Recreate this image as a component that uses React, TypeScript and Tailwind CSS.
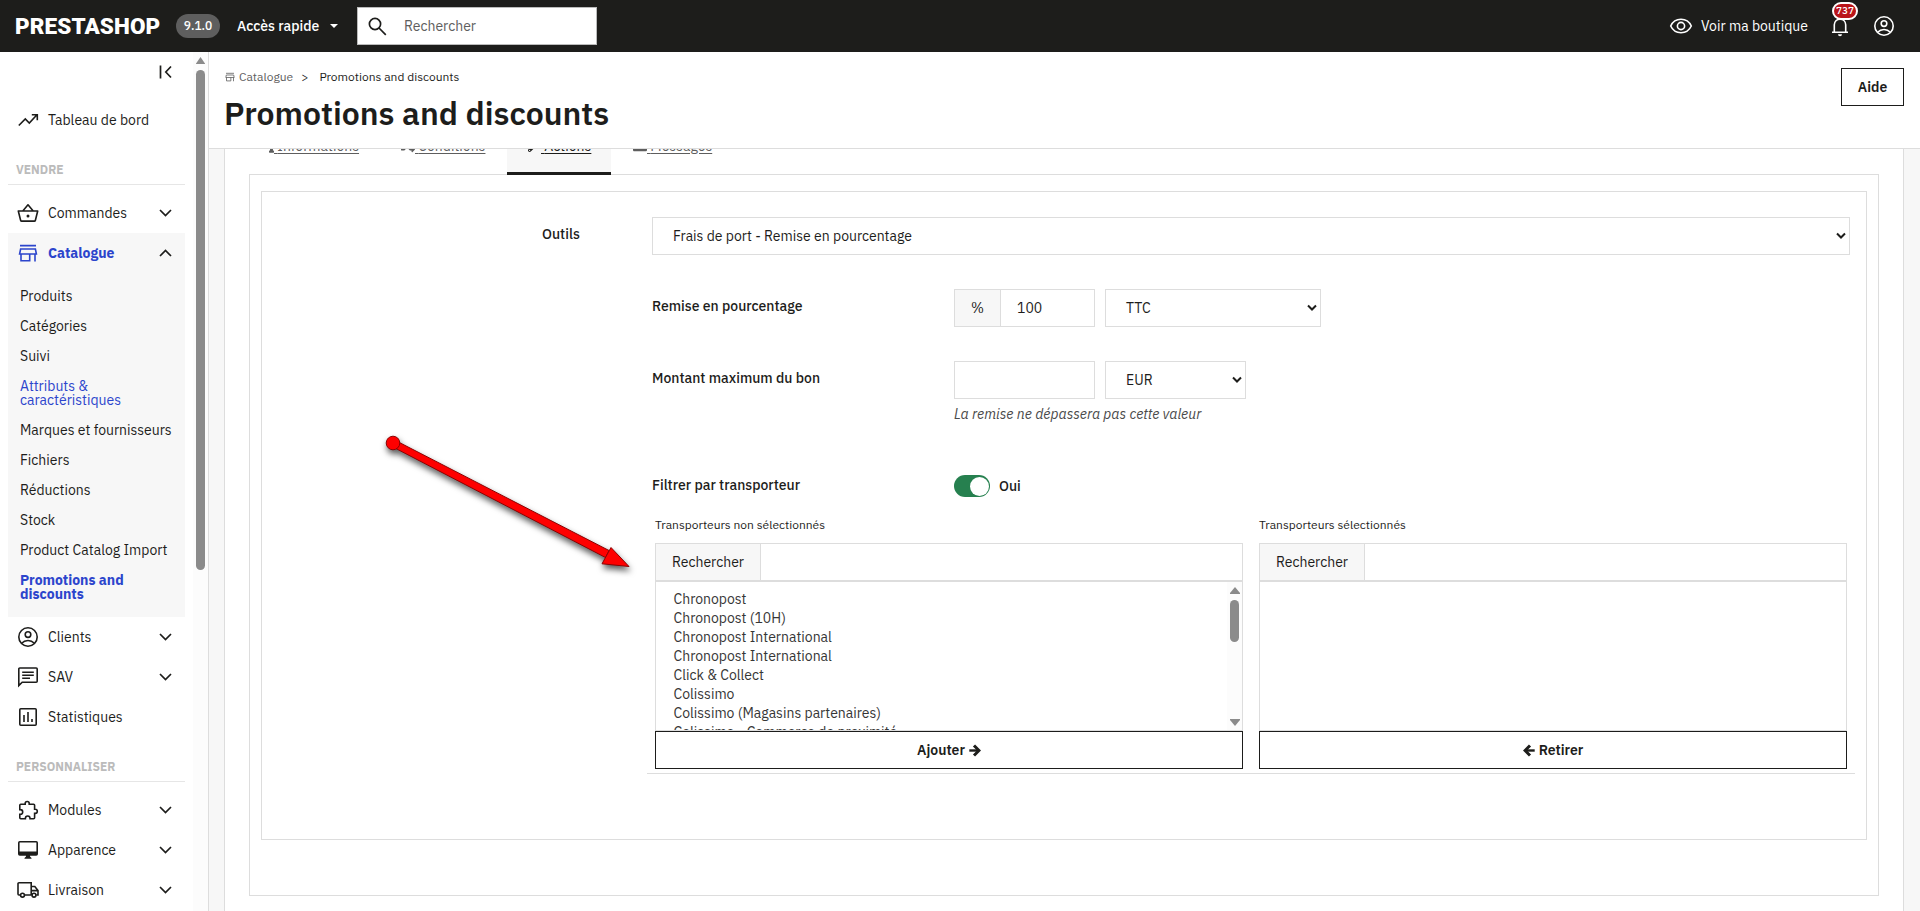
import type { ReactNode } from "react";
import type { IconType } from "react-icons";
import { FaEnvelope, FaInfo, FaRandom, FaWrench } from "react-icons/fa";

type IconProps = { size?: number; className?: string };

function Glyph({ size = 24, className = "", children }: IconProps & { children: ReactNode }) {
  return (
    <svg width={size} height={size} viewBox="0 0 24 24" fill="none" stroke="currentColor" strokeWidth="1.600" className={`shrink-0 ${className}`}>
      {children}
    </svg>
  );
}

const TrendIcon = (p: IconProps) => (
  <Glyph {...p}><path d="M2.800 17.500 9.300 11l4 4L20.500 7.200M15.800 6.700h5.500v5.500" /></Glyph>
);
const BasketIcon = (p: IconProps) => (
  <Glyph {...p}>
    <path d="M2.300 10h19.400l-2.300 9.200a1.200 1.200 0 0 1-1.200.9H5.800a1.200 1.200 0 0 1-1.200-.9zM7 9.800l5-6 5 6" strokeLinejoin="round" />
    <circle cx="12" cy="15" r="1.500" fill="currentColor" stroke="none" />
  </Glyph>
);
const StoreIcon = (p: IconProps) => (
  <Glyph {...p}><path d="M4 4.600h16M4.600 8h14.800l1 5H3.600zM5 13v6.800h8.700V13M19 13v7.500" /></Glyph>
);
const AccountIcon = (p: IconProps) => (
  <Glyph {...p}>
    <circle cx="12" cy="12" r="9.200" />
    <circle cx="12" cy="9.600" r="2.800" />
    <path d="M5.600 18.300c1.800-1.900 4-2.800 6.400-2.800s4.600.9 6.400 2.800" />
  </Glyph>
);
const ChatIcon = (p: IconProps) => (
  <Glyph {...p}><path d="M2.800 20.600V4a1 1 0 0 1 1-1h16.400a1 1 0 0 1 1 1v12.200a1 1 0 0 1-1 1H6.200zM6.200 7.200h11.600M6.200 10.200h11.600M6.200 13.200h7.800" /></Glyph>
);
const StatsIcon = (p: IconProps) => (
  <Glyph {...p}><rect x="3.800" y="3.800" width="16.400" height="16.400" rx="1" /><path d="M8 10v7M12 7v10M16 14v3" /></Glyph>
);
const PuzzleIcon = (p: IconProps) => (
  <Glyph {...p}><path d="M3.800 7.200a1 1 0 0 1 1-1h4.400v-.7a2 2 0 0 1 4 0v.7h4.400a1 1 0 0 1 1 1v4h.6a2.100 2.100 0 0 1 0 4.200h-.6v4.400a1 1 0 0 1-1 1H14v-.5a2.300 2.300 0 0 0-4.600 0v.5H4.800a1 1 0 0 1-1-1v-3.600h.6a2.300 2.300 0 0 0 0-4.600h-.6z" /></Glyph>
);
const DesktopIcon = (p: IconProps) => (
  <Glyph {...p}><rect x="2.800" y="3.800" width="18.400" height="13.200" rx="1" /><path d="M3 13.500h18V17h-7v1.500l1.500 1.500v.8h-7V20l1.500-1.500V17H3z" fill="currentColor" stroke="none" /></Glyph>
);
const TruckIcon = (p: IconProps) => (
  <Glyph {...p}>
    <path d="M4.500 17H3a1 1 0 0 1-1-1V5.800a1 1 0 0 1 1-1h12.200V17M8.500 17h7.300M15.200 8.500h3.600l3.200 4.100V17h-1.800M16 12.600h5.800" />
    <circle cx="6.500" cy="17.200" r="1.900" />
    <circle cx="18" cy="17.200" r="1.900" />
  </Glyph>
);
const EyeIcon = (p: IconProps) => (
  <Glyph {...p}>
    <path d="M1.700 12C3.600 7.900 7.500 5.300 12 5.300S20.400 7.900 22.300 12c-1.900 4.100-5.800 6.700-10.300 6.700S3.600 16.100 1.700 12z" />
    <circle cx="12" cy="12" r="3.600" />
  </Glyph>
);
const BellIcon = (p: IconProps) => (
  <Glyph {...p}>
    <path d="M4 18.300h16M6.300 18V10.800C6.300 7.500 8.800 5.100 12 5.100s5.700 2.400 5.700 5.700V18M12 5V3" />
    <path d="M10 20.200h4a2 2 0 0 1-4 0z" fill="currentColor" stroke="none" />
  </Glyph>
);

function Chevron({ up }: { up?: boolean }) {
  return (
    <svg width="13" height="8" viewBox="0 0 13 8" fill="none" stroke="#1d1d1b" strokeWidth="1.700" className="shrink-0">
      <path d={up ? "M1 7 6.500 1.500 12 7" : "M1 1 6.500 6.500 12 1"} />
    </svg>
  );
}

function TopBar() {
  return (
    <header className="flex h-[52px] shrink-0 items-center bg-[#1d1d1b] text-white">
      <div className="ml-[15px] w-[161px] font-[Roboto] text-[22.500px] leading-none font-black tracking-[0.1px]">PRESTASHOP</div>
      <span className="flex h-6 w-11 items-center justify-center rounded-full bg-[#5e5e5e] text-[12px] font-medium">9.1.0</span>
      <button className="ml-[17px] flex w-[101px] items-center justify-between text-sm font-medium">
        Accès rapide
        <svg width="8" height="4" viewBox="0 0 8 4" fill="currentColor"><path d="M0 0h8L4 4z" /></svg>
      </button>
      <div className="ml-[19px] flex h-[38px] w-[240px] items-center border border-[#bbb] bg-white pl-[10px]">
        <svg width="19" height="19" viewBox="0 0 19 19" fill="none" stroke="#1d1d1b" strokeWidth="1.700"><circle cx="7" cy="7" r="5.600" /><path d="m11 11 6.800 6.800" /></svg>
        <span className="ml-[17px] text-sm text-[#5e5e5e]">Rechercher</span>
      </div>
      <a className="ml-auto flex items-center gap-2 text-sm">
        <EyeIcon />
        Voir ma boutique
      </a>
      <div className="relative ml-5">
        <BellIcon />
        <span className="absolute -top-[12px] left-[4px] flex h-[18px] w-[26px] items-center justify-center rounded-full border-2 border-white bg-[#ba151a] text-[10px] leading-none font-medium">737</span>
      </div>
      <AccountIcon className="mr-6 ml-5" />
    </header>
  );
}

type Icon = (p: IconProps) => ReactNode;

function NavItem({ icon: Icon, label, chevron }: { icon: Icon; label: string; chevron?: boolean }) {
  return (
    <div className="flex h-10 items-center pr-[13px] pl-2 text-sm">
      <Icon />
      <span className="ml-2 flex-1">{label}</span>
      {chevron && <Chevron />}
    </div>
  );
}

function NavHeading({ children }: { children: ReactNode }) {
  return (
    <div className="flex h-[25px] items-start border-b border-[#e6e6e6] pl-2 text-xs leading-[20px] font-bold text-[#bbb]">{children}</div>
  );
}

const beforeSelected = ["Produits", "Catégories", "Suivi"];
const afterSelected = ["Marques et fournisseurs", "Fichiers", "Réductions", "Stock", "Product Catalog Import"];

function Sidebar() {
  return (
    <div className="flex w-[209px] shrink-0 overflow-hidden border-r border-[#ddd]">
      <nav className="flex w-[185px] shrink-0 flex-col pl-2">
        <div className="flex h-[48px] shrink-0 items-start justify-end pt-[13px] pr-[13px]">
          <svg width="13" height="14" viewBox="0 0 13 14" fill="none" stroke="#1d1d1b" strokeWidth="1.700"><path d="M1.500.5v13M12 1.500 6.800 7l5.200 5.500" /></svg>
        </div>
        <NavItem icon={TrendIcon} label="Tableau de bord" />
        <div className="h-[20px] shrink-0" />
        <NavHeading>VENDRE</NavHeading>
        <div className="h-2 shrink-0" />
        <NavItem icon={BasketIcon} label="Commandes" chevron />
        <div className="h-[384px] shrink-0 bg-[#f7f7f7]">
          <div className="flex h-10 items-center pr-[13px] pl-2 text-sm font-bold text-[#2c45cc]">
            <StoreIcon />
            <span className="ml-2 flex-1">Catalogue</span>
            <Chevron up />
          </div>
          <ul className="flex flex-col gap-4 pt-4 pl-3 text-sm leading-[14px]">
            {beforeSelected.map((t) => <li key={t}>{t}</li>)}
            <li className="text-[#2c45cc]">Attributs &amp;<br />caractéristiques</li>
            {afterSelected.map((t) => <li key={t} className="whitespace-nowrap">{t}</li>)}
            <li className="font-bold text-[#2c45cc]">Promotions and<br />discounts</li>
          </ul>
        </div>
        <NavItem icon={AccountIcon} label="Clients" chevron />
        <NavItem icon={ChatIcon} label="SAV" chevron />
        <NavItem icon={StatsIcon} label="Statistiques" />
        <div className="h-[20px] shrink-0" />
        <NavHeading>PERSONNALISER</NavHeading>
        <div className="h-2 shrink-0" />
        <NavItem icon={PuzzleIcon} label="Modules" chevron />
        <NavItem icon={DesktopIcon} label="Apparence" chevron />
        <NavItem icon={TruckIcon} label="Livraison" chevron />
      </nav>
      <div className="ml-2 flex w-[15px] flex-col items-center bg-[#fcfcfc] pt-[5px]">
        <svg width="9" height="7" viewBox="0 0 9 7" fill="#8b8b8b"><path d="M4.500 0 9 6.500v.5H0v-.5z" /></svg>
        <div className="mt-[6px] h-[500px] w-[9px] rounded-full bg-[#8b8b8b]" />
      </div>
    </div>
  );
}

function SelectBox({ value, className }: { value: string; className: string }) {
  return (
    <div className={`flex h-[38px] items-center justify-between border border-[#ddd] bg-white pr-[3px] pl-5 text-sm ${className}`}>
      {value}
      <svg width="10" height="8" viewBox="0 0 10 8" fill="none" stroke="#1d1d1b" strokeWidth="2"><path d="M1 1.500 5 5.500 9 1.500" /></svg>
    </div>
  );
}

function Tab({ icon: Icon, label, active, iconClass, className }: { icon: IconType; label: string; active?: boolean; iconClass: string; className: string }) {
  return (
    <a className={`flex h-[50px] items-center border-b-[3px] pb-[6px] text-sm leading-5 ${active ? "border-[#1d1d1b] bg-[#f7f7f7] text-[#1d1d1b]" : "border-transparent text-[#5e5e5e]"} ${className}`}>
      <Icon className={iconClass} />
      <span className="underline underline-offset-2">&nbsp;{label}</span>
    </a>
  );
}

const carriers = [
  "Chronopost",
  "Chronopost (10H)",
  "Chronopost International",
  "Chronopost International",
  "Click & Collect",
  "Colissimo",
  "Colissimo (Magasins partenaires)",
  "Colissimo - Commerce de proximité",
];

function CarrierPanel({ title, options, children }: { title: string; options: string[]; children: ReactNode }) {
  return (
    <div className="w-[588px]">
      <div className="text-xs leading-[18px]">{title}</div>
      <div className="mt-[9px] flex h-[38px] border border-[#ddd]">
        <span className="flex w-[105px] items-center justify-center border-r border-[#ddd] bg-[#f7f7f7] text-sm">Rechercher</span>
      </div>
      <div className="flex h-[150px] justify-between overflow-hidden border border-[#ddd]">
        <ul className="pt-[8px] pl-[17.500px] text-sm leading-[19px] text-[#363636]">
          {options.map((o, i) => <li key={i}>{o}</li>)}
        </ul>
        {options.length > 0 && (
          <div className="flex w-[15px] flex-col items-center bg-[#fcfcfc] pt-[5px]">
            <svg width="10" height="7" viewBox="0 0 10 7" fill="#8b8b8b"><path d="M5 0 10 6v1H0V6z" /></svg>
            <div className="mt-[6px] h-[42px] w-[9px] rounded-full bg-[#8b8b8b]" />
            <svg className="mt-[77px]" width="10" height="7" viewBox="0 0 10 7" fill="#8b8b8b"><path d="M0 0h10v1L5 7 0 1z" /></svg>
          </div>
        )}
      </div>
      <button className="flex h-[38px] w-full items-center justify-center gap-1 border border-[#1d1d1b] bg-white text-sm font-semibold">{children}</button>
    </div>
  );
}

function BoldArrow({ left }: { left?: boolean }) {
  return (
    <svg width="12" height="13" viewBox="0 0 12 13" fill="none" stroke="currentColor" strokeWidth="3" className={left ? "rotate-180" : ""}>
      <path d="M.3 6.500H9.500" strokeWidth="2.400" />
      <path d="M5 1.500l5 5-5 5" />
    </svg>
  );
}

function PageHeader() {
  return (
    <div className="flex h-[97px] shrink-0 justify-between border-b border-[#ddd] bg-white pt-4 pr-4 pl-[15px]">
      <div>
        <div className="flex h-[18px] items-center text-xs">
          <StoreIcon size={12} className="text-[#5e5e5e]" />
          <span className="ml-[3px] text-[#5e5e5e]">Catalogue</span>
          <span className="mr-[11px] ml-2">&gt;</span>
          <span>Promotions and discounts</span>
        </div>
        <h1 className="mt-[8px] text-[32px] leading-[38px] font-semibold">Promotions and discounts</h1>
      </div>
      <button className="flex h-[38px] w-[63px] items-center justify-center border border-[#1d1d1b] text-sm font-semibold">Aide</button>
    </div>
  );
}

function ActionsForm() {
  return (
    <div className="h-[649px] border border-[#ddd] pt-[25px] pl-[280px]">
      <div className="flex">
        <div className="w-[110px] pt-[7px] text-sm leading-5 font-medium">Outils</div>
        <SelectBox value="Frais de port - Remise en pourcentage" className="w-[1198px]" />
      </div>
      <div className="pl-[105px]">
        <div className="mt-[34px] flex pl-[5px]">
          <div className="w-[302px] pt-[7px] text-sm leading-5 font-medium">Remise en pourcentage</div>
          <div className="flex h-[38px] w-[141px] border border-[#ddd] text-sm">
            <span className="flex w-[46px] items-center justify-center border-r border-[#ddd] bg-[#f7f7f7]">%</span>
            <span className="flex items-center pl-4">100</span>
          </div>
          <SelectBox value="TTC" className="ml-[10px] w-[216px]" />
        </div>
        <div className="mt-[34px] flex pl-[5px]">
          <div className="w-[302px] pt-[7px] text-sm leading-5 font-medium">Montant maximum du bon</div>
          <div>
            <div className="flex">
              <div className="h-[38px] w-[141px] border border-[#ddd]" />
              <SelectBox value="EUR" className="ml-[10px] w-[141px]" />
            </div>
            <div className="mt-[5px] text-sm leading-5 text-[#4a4a4a] italic">La remise ne dépassera pas cette valeur</div>
          </div>
        </div>
        <div className="mt-[51px] flex h-[22px] items-center pl-[5px] text-sm">
          <div className="w-[302px] pb-[2px] font-medium">Filtrer par transporteur</div>
          <div className="flex h-[22px] w-9 items-center justify-end rounded-full bg-[#26804f] pr-[1px]">
            <div className="h-[19px] w-[19px] rounded-full bg-white" />
          </div>
          <span className="ml-[9px] font-medium">Oui</span>
        </div>
        <div className="mt-[19px] flex w-[1208px] gap-4 border-b border-[#ddd] pb-[4px] pl-[8px]">
          <CarrierPanel title="Transporteurs non sélectionnés" options={carriers}>Ajouter<BoldArrow /></CarrierPanel>
          <CarrierPanel title="Transporteurs sélectionnés" options={[]}><BoldArrow left />Retirer</CarrierPanel>
        </div>
      </div>
    </div>
  );
}

function PointerArrow() {
  return (
    <svg className="absolute top-[430px] left-[380px] drop-shadow-[1px_4px_3px_rgba(0,0,0,0.65)]" width="270" height="150" viewBox="380 430 270 150">
      <g fill="#fe0000" stroke="#8c0000" strokeWidth="1">
        <path d="M394.500 440 609 550.500 605.500 557.500 391 446z" />
        <circle cx="393" cy="443" r="6.800" />
        <path d="M611 547.500 629 566.500 602 563.800z" />
      </g>
    </svg>
  );
}

export default function App() {
  return (
    <div className="relative flex h-[911px] w-full flex-col overflow-hidden bg-white font-['IBM_Plex_Sans',Roboto,sans-serif] text-[#1d1d1b]">
      <TopBar />
      <div className="flex min-h-0 flex-1">
        <Sidebar />
        <main className="flex min-w-0 flex-1 flex-col">
          <PageHeader />
          <div className="min-h-0 flex-1 overflow-hidden bg-[#f7f7f7] pr-[16px] pl-[15px]">
            <div className="-mt-[24px] h-[860px] border-x border-[#ddd] bg-white pr-6 pl-6">
              <div className="flex">
                <Tab icon={FaInfo} label="Informations" iconClass="h-[14px] w-[5px]" className="w-[130px] pl-5" />
                <Tab icon={FaRandom} label="Conditions" iconClass="h-[14px] w-[14px]" className="w-[128px] pl-[22px]" />
                <Tab icon={FaWrench} label="Actions" active iconClass="h-[13px] w-[13px]" className="w-[104px] pl-[21px]" />
                <Tab icon={FaEnvelope} label="Messages" iconClass="h-[14px] w-[14px]" className="w-[122px] pl-[22px]" />
              </div>
              <div className="-mt-px h-[722px] border border-[#ddd] px-[11px] pt-4">
                <ActionsForm />
              </div>
            </div>
          </div>
        </main>
      </div>
      <PointerArrow />
    </div>
  );
}
